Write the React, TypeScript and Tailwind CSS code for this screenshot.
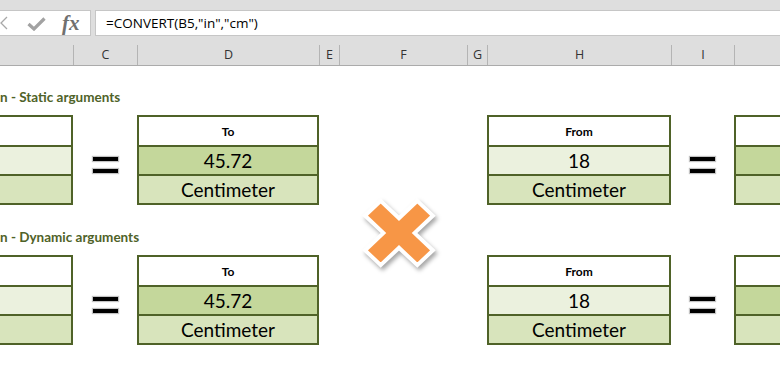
import React from 'react';

const cols = 'grid grid-cols-[73px_64px_182px_20px_128px_20px_184px_63px_46px]';

function Equals() {
  return (
    <div className="flex h-full flex-col items-center justify-center gap-[8px] pt-[10px]">
      <div className="h-[4px] w-[25px] bg-black shadow-[0_0_1px_1px_rgba(120,120,120,0.45)]" />
      <div className="h-[4px] w-[25px] bg-black shadow-[0_0_1px_1px_rgba(120,120,120,0.45)]" />
    </div>
  );
}

interface TableProps {
  head: string;
  value: string;
  unit: string;
  valueBg: string;
  sides: string;
}

function UnitTable({ head, value, unit, valueBg, sides }: TableProps) {
  return (
    <div className={`flex h-[90px] flex-col border-[#4f6228] ${sides}`}>
      <div className="flex h-[28px] items-center justify-center bg-white pt-[1px] text-[12px] font-bold text-black">
        {head}
      </div>
      <div className={`flex h-[29px] items-center justify-center border-t-2 border-[#4f6228] pt-[2px] text-[19px] text-black ${valueBg}`}>
        {value}
      </div>
      <div className="flex h-[29px] items-center justify-center border-t-2 border-[#4f6228] bg-[#d8e4bc] pt-[2px] text-[19px] text-black">
        {unit}
      </div>
    </div>
  );
}

function Section({ title }: { title: string }) {
  return (
    <div className="flex flex-col">
      <div className="flex h-[20px] items-center text-[13.5px] font-bold text-[#4f6228]">{title}</div>
      <div className={`${cols} mt-[8px]`}>
        <UnitTable head="" value="" unit="" valueBg="bg-[#ebf1de]" sides="border-y-2 border-r-2" />
        <Equals />
        <UnitTable head="To" value="45.72" unit="Centimeter" valueBg="bg-[#c4d79b]" sides="border-2" />
        <div />
        <div />
        <div />
        <UnitTable head="From" value="18" unit="Centimeter" valueBg="bg-[#ebf1de]" sides="border-2" />
        <Equals />
        <UnitTable head="" value="" unit="" valueBg="bg-[#c4d79b]" sides="border-y-2 border-l-2" />
      </div>
    </div>
  );
}

export default function App() {
  const letters = ['', 'C', 'D', 'E', 'F', 'G', 'H', 'I', ''];

  return (
    <div className="relative h-[366px] w-[780px] overflow-hidden bg-white font-['Lato','Noto_Sans',sans-serif]">
      {/* Formula bar */}
      <div className="bg-[#dedede] pt-[10px]">
        <div className="flex h-[26px]">
          <div className="relative flex w-[91px] items-center border-y border-r border-[#c6c6c6] bg-white">
            <svg className="absolute left-0 top-[5px]" width="8" height="14" viewBox="0 0 8 14">
              <path d="M7 1 L1 7 L7 13" fill="none" stroke="#a8a8a8" strokeWidth="1.3" />
            </svg>
            <svg className="absolute left-[27px] top-[6px]" width="19" height="14" viewBox="0 0 19 14">
              <path d="M1.5 7 L7 12 L17.5 1.5" fill="none" stroke="#a2a2a2" strokeWidth="3.2" />
            </svg>
            <span className="absolute left-[62px] top-[0px] font-['Liberation_Serif',serif] text-[21px] font-bold italic leading-[24px] text-[#707070]">
              fx
            </span>
          </div>
          <div className="w-[4px]" />
          <div className="flex flex-1 items-center border-y border-l border-[#c6c6c6] bg-white pl-[10px] font-['Open_Sans',sans-serif] text-[13.5px] text-black">
            =CONVERT(B5,"in","cm")
          </div>
        </div>

        {/* Column headers */}
        <div className={`${cols} mt-[9px] h-[21px] border-b border-[#ababab]`}>
          {letters.map((l, i) => (
            <div
              key={i}
              className={`flex items-center justify-center font-['Open_Sans',sans-serif] text-[12.5px] text-[#333] ${i > 0 ? 'border-l border-[#b4b4b4]' : ''}`}
            >
              {l}
            </div>
          ))}
        </div>
      </div>

      {/* Sheet */}
      <div className="flex flex-col gap-[22px] pt-[21px]">
        <Section title="n - Static arguments" />
        <Section title="n - Dynamic arguments" />
      </div>

      {/* Floating cross shape */}
      <svg
        className="absolute left-[361px] top-[197px] drop-shadow-[2px_3px_2px_rgba(0,0,0,0.35)]"
        width="76"
        height="72"
        viewBox="-6 -6 112 112"
        preserveAspectRatio="none"
      >
        <polygon
          points="0,23 23,0 50,27 77,0 100,23 73,50 100,77 77,100 50,73 23,100 0,77 27,50"
          fill="#f79646"
          stroke="#ffffff"
          strokeWidth="6"
          strokeLinejoin="miter"
        />
      </svg>
    </div>
  );
}
